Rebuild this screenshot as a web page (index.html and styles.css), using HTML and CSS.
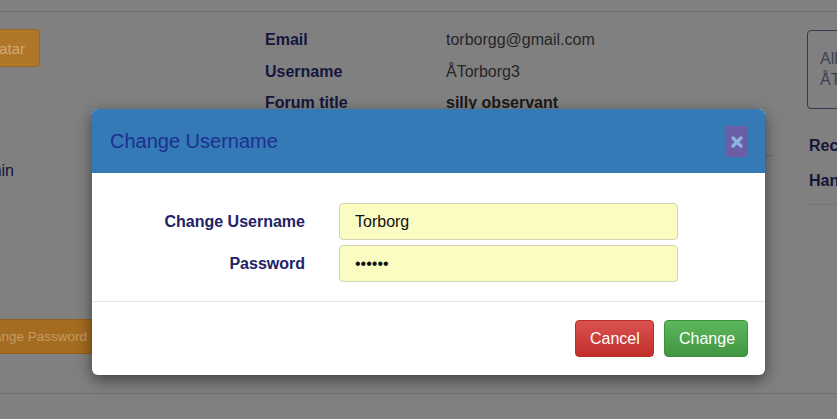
FILE: index.html
```html
<!DOCTYPE html>
<html lang="en">
<head>
<meta charset="utf-8">
<title>Change Username</title>
<link rel="stylesheet" href="styles.css">
</head>
<body>
<div class="page">
  <div class="rule rule-top"></div>
  <div class="cols">
    <div class="col-left">
      <button class="btn-warn btn-avatar">Change Avatar</button>
      <span class="left-text">Admin</span>
      <button class="btn-warn btn-pass">Change Password</button>
    </div>
    <div class="col-mid">
      <div class="row"><span class="k">Email</span><span class="v">torborgg@gmail.com</span></div>
      <div class="row"><span class="k">Username</span><span class="v">ÅTorborg3</span></div>
      <div class="row"><span class="k">Forum title</span><span class="v strong">silly observant</span></div>
      <div class="rule rule-mid"></div>
    </div>
    <div class="col-right">
      <div class="info-box">All<br>ÅTorborg3</div>
      <div class="side-item first">Recent</div>
      <div class="side-item">Handle</div>
      <div class="rule rule-side"></div>
    </div>
  </div>
  <div class="rule rule-bottom"></div>
</div>

<div class="modal">
  <div class="modal-header">
    <h4 class="modal-title">Change Username</h4>
    <button class="close" aria-label="Close">
      <svg width="12" height="12" viewBox="0 0 12 12"><path d="M2 2 L10 10 M10 2 L2 10" stroke="#8fb3e0" stroke-width="3.2" stroke-linecap="round"/></svg>
    </button>
  </div>
  <div class="modal-body">
    <label class="f-label" for="nu">Change Username</label>
    <input class="f-input" id="nu" type="text" value="Torborg">
    <label class="f-label" for="pw">Password</label>
    <input class="f-input" id="pw" type="password" value="secret">
  </div>
  <div class="modal-footer">
    <button class="btn btn-cancel">Cancel</button>
    <button class="btn btn-change">Change</button>
  </div>
</div>
</body>
</html>
```

FILE: styles.css
```css
html, body {
  margin: 0;
  padding: 0;
}
body {
  background: #808080;
  font-family: "Liberation Sans", Arial, sans-serif;
  font-size: 16px;
  width: 837px;
  height: 419px;
  overflow: hidden;
  position: relative;
}
.page {
  padding-top: 11px;
}
.rule {
  height: 1px;
  background: #6f6f6f;
}
.cols {
  display: flex;
  height: 381px;
}
.col-left {
  flex: 0 0 160px;
  min-width: 0;
  margin-left: -60px;
  display: flex;
  flex-direction: column;
  align-items: flex-end;
}
.btn-warn {
  flex-shrink: 0;
  white-space: nowrap;
  font-family: "Liberation Sans", Arial, sans-serif;
  font-size: 15px;
  border: 1px solid #9a6720;
  border-radius: 4px;
  padding: 0 14px;
  background: #b0762a;
  color: #d2aa70;
}
.btn-avatar {
  margin-top: 17px;
  height: 38px;
  margin-right: 60px;
}
.left-text {
  margin-top: 94px;
  margin-right: 86px;
  color: #14143a;
  line-height: 20px;
  white-space: nowrap;
}
.btn-pass {
  margin-top: 138px;
  height: 35px;
  padding: 0 12px;
  background: #a46c20;
  border-color: #935f18;
  color: #c49b60;
  font-size: 13.5px;
}
.col-mid {
  flex: 0 0 508px;
  min-width: 0;
  margin-left: 165px;
  padding-top: 12px;
}
.row {
  display: flex;
  line-height: 31.5px;
  white-space: nowrap;
}
.k {
  flex: 0 0 181px;
  font-weight: bold;
  color: #15153d;
}
.v {
  color: #262626;
}
.v.strong {
  font-weight: bold;
  color: #1a1a1a;
}
.rule-mid {
  margin-top: 36px;
}
.col-right {
  flex: 0 0 200px;
  min-width: 0;
  margin-left: 34px;
  padding-top: 18px;
}
.info-box {
  width: 160px;
  height: 79px;
  box-sizing: border-box;
  border: 1px solid #2f3b4c;
  border-radius: 4px;
  padding: 17px 0 0 12px;
  line-height: 21px;
  color: #3b4250;
  white-space: nowrap;
}
.side-item {
  font-weight: bold;
  color: #14143a;
  line-height: 20px;
  margin-top: 15px;
  padding-left: 2px;
  white-space: nowrap;
}
.side-item.first {
  margin-top: 27px;
}
.rule-side {
  margin-top: 13px;
  background: #777;
  margin-left: -2px;
}

/* modal */
.modal {
  position: absolute;
  left: 92px;
  top: 109px;
  width: 673px;
  background: #fff;
  border-radius: 6px;
  box-shadow: 0 5px 15px rgba(0, 0, 0, 0.5);
}
.modal-header {
  height: 64px;
  box-sizing: border-box;
  background: #337ab7;
  border-radius: 6px 6px 0 0;
  display: flex;
  align-items: center;
  justify-content: space-between;
  padding: 0 17px 0 18px;
}
.modal-title {
  margin: 0;
  font-weight: normal;
  font-size: 20px;
  color: #1f2f8c;
  line-height: 24px;
}
.close {
  width: 23px;
  height: 31px;
  margin-top: 1px;
  border: none;
  padding: 0;
  background: #6a5fa7;
  display: flex;
  align-items: center;
  justify-content: center;
}
.modal-body {
  display: grid;
  grid-template-columns: 213px 339px;
  column-gap: 34px;
  row-gap: 5px;
  align-items: center;
  padding: 30px 0 19px 0;
  border-bottom: 1px solid #e5e5e5;
}
.f-label {
  text-align: right;
  font-weight: bold;
  color: #222266;
  font-size: 16px;
}
.f-input {
  box-sizing: border-box;
  height: 37px;
  width: 339px;
  margin: 0;
  padding: 0 15px;
  background: #fafcc2;
  border: 1px solid #d2d3b0;
  border-radius: 4px;
  font-family: "Liberation Sans", Arial, sans-serif;
  font-size: 16px;
  color: #111;
  outline: none;
}
.modal-footer {
  display: flex;
  justify-content: flex-end;
  gap: 10px;
  padding: 18px 17px 18px 0;
}
.btn {
  height: 37px;
  padding: 0 14px;
  border-radius: 4px;
  font-family: "Liberation Sans", Arial, sans-serif;
  font-size: 16px;
  color: #fff;
}
.btn-cancel {
  width: 79px;
  background: linear-gradient(to bottom, #d9534f 0, #c12e2a 100%);
  border: 1px solid #b92c28;
}
.btn-change {
  width: 84px;
  background: linear-gradient(to bottom, #5cb85c 0, #419641 100%);
  border: 1px solid #3e8f3e;
}
```
